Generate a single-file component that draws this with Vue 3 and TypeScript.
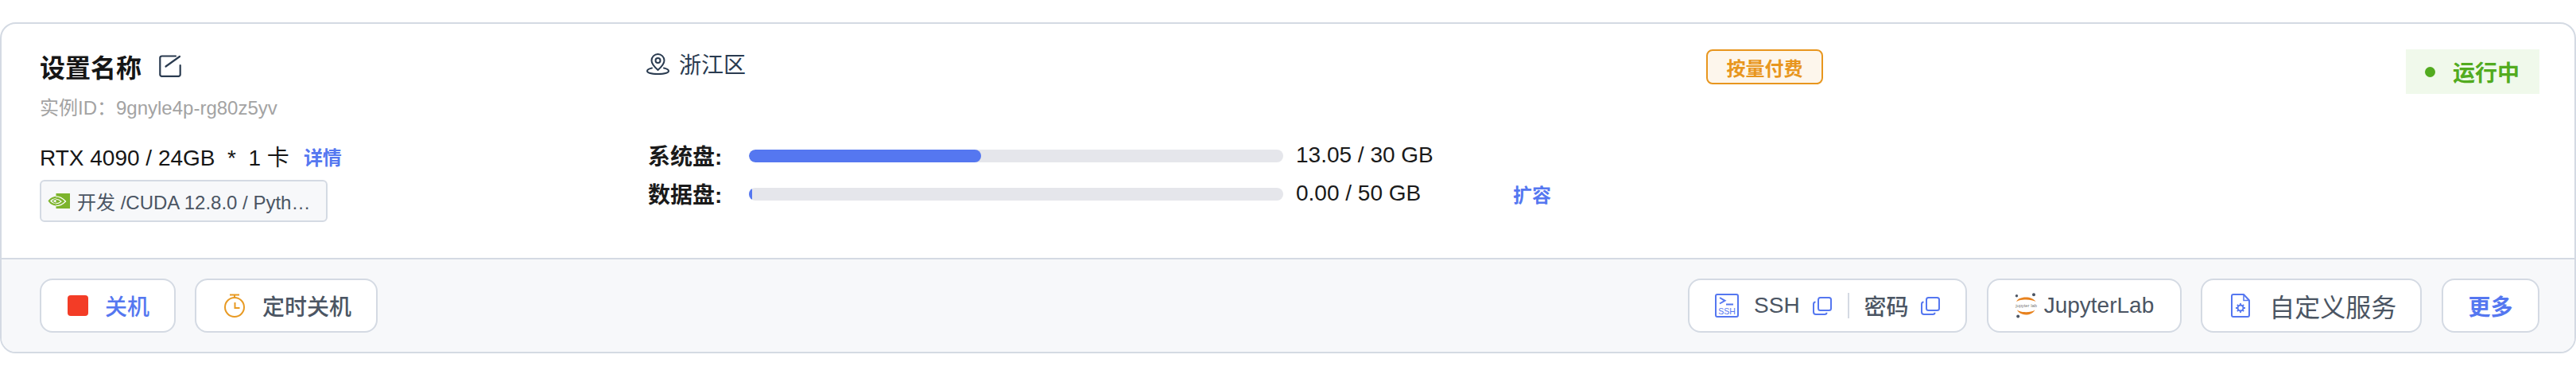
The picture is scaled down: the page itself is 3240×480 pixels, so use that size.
<script setup lang="ts">
interface Disk {
  label: string
  used: number
  total: number
  expand: boolean
}
const disks: Disk[] = [
  { label: '系统盘:', used: 13.05, total: 30, expand: false },
  { label: '数据盘:', used: 0, total: 50, expand: true },
]
const pct = (d: Disk): string => (d.used === 0 ? '4px' : `${(d.used / d.total) * 100}%`)
</script>

<template>
  <div class="page">
    <section class="card">
      <div class="top">
        <div class="col-left">
          <div class="title-row">
            <span class="title">设置名称</span>
            <svg class="edit" viewBox="0 0 28 28" fill="none" stroke="#2a3b50" stroke-width="2.2" stroke-linecap="round" stroke-linejoin="round">
              <path d="M21 1.500H3.500a2.200 2.200 0 0 0-2.200 2.200v21a2.200 2.200 0 0 0 2.200 2.200h21a2.200 2.200 0 0 0 2.200-2.200V13" />
              <path d="M8.500 14.500 26 2" />
            </svg>
          </div>
          <div class="instance">实例ID&#xFF1A;9gnyle4p-rg80z5yv</div>
          <div class="gpu-row">
            <span class="gpu">RTX 4090 / 24GB &nbsp;*&nbsp; 1 卡</span>
            <span class="link detail">详情</span>
          </div>
          <div class="image-tag">
            <svg class="nvidia" viewBox="0 0 28 19" fill="none">
              <rect x="10.500" y="0" width="17.500" height="19" fill="#7db42c" />
              <path d="M10.500 3.800C5.500 4.200 2.500 6.800.5 9.600c2 3 5 5.600 10 6v-2.200C7 13 4.500 11.500 3 9.600 4.500 7.800 7 6.300 10.500 6z" fill="#7db42c" />
              <path d="M10.500 3.800c5 0 8.800 2.800 12 6.200-3.200 3.400-7 5.600-12 5.600" stroke="#fff" stroke-width="1.300" />
              <path d="M10.500 7.200c3 0 4.800 1.300 6.500 3-1.700 1.700-3.600 2.500-6.500 2.500" stroke="#fff" stroke-width="1.100" />
              <path d="M10.500 7.200C8.500 7.500 7 8.400 6 9.600c1 1.200 2.500 2.200 4.500 2.600" stroke="#7db42c" stroke-width="1.300" />
            </svg>
            <span class="image-text">开发 /CUDA 12.8.0 / Pyth…</span>
          </div>
        </div>

        <div class="col-mid">
          <div class="location">
            <svg class="pin" viewBox="0 0 29 27" fill="none" stroke="#2a3b50" stroke-width="2">
              <path d="M14.500 21C10 17 6.500 13.500 6.500 9a8 8 0 0 1 16 0c0 4.500-3.500 8-8 12z" stroke-linejoin="round" />
              <circle cx="14.500" cy="9" r="3" />
              <path d="M7 18.500C3.500 19.300 1 20.500 1 22.300c0 2.400 6 3.700 13.500 3.700S28 24.700 28 22.300c0-1.800-2.500-3-6-3.800" stroke-linecap="round" />
            </svg>
            <span>浙江区</span>
          </div>
          <div class="disks">
            <div v-for="d in disks" :key="d.label" class="disk">
              <span class="disk-label">{{ d.label }}</span>
              <div class="bar"><div class="bar-fill" :style="{ width: pct(d) }"></div></div>
              <span class="disk-value">{{ d.used.toFixed(2) }} / {{ d.total }} GB</span>
              <span v-if="d.expand" class="link expand">扩容</span>
            </div>
          </div>
        </div>

        <div class="col-right">
          <span class="pay-tag">按量付费</span>
          <span class="status"><i class="dot"></i>运行中</span>
        </div>
      </div>

      <div class="footer">
        <div class="group">
          <button class="btn btn-stop">
            <i class="stop-icon"></i>
            <span class="blue cjk">关机</span>
          </button>
          <button class="btn btn-timer">
            <svg class="ic-timer" viewBox="0 0 26 30" fill="none" stroke="#e89a23" stroke-width="2">
              <circle cx="13" cy="17" r="12" />
              <path d="M7 1.500h12M13 1.500V5" />
              <path d="M13.500 11v7h6" />
            </svg>
            <span class="cjk">定时关机</span>
          </button>
        </div>
        <div class="group group-right">
          <button class="btn btn-ssh">
            <svg class="ic-ssh" viewBox="0 0 30 30" fill="none">
              <rect x="1" y="1" width="28" height="28" rx="2" stroke="#5577f0" stroke-width="2" />
              <path d="M6 5 12.500 8.800 6 12.500M14 13.500h9" stroke="#5577f0" stroke-width="2" />
              <text x="15" y="26" text-anchor="middle" fill="#5577f0" font-size="10.500" font-family="Liberation Sans, sans-serif">SSH</text>
            </svg>
            <span class="ssh-label">SSH</span>
            <svg class="ic-copy" viewBox="0 0 24 23" fill="none" stroke="#5577f0" stroke-width="2">
              <rect x="7" y="1" width="16" height="16" rx="2.500" />
              <path d="M3.500 6.500C2 6.500 1 7.500 1 9v10c0 2 1.500 3 3 3h11c1.500 0 2.500-1 2.500-2.200" />
            </svg>
            <i class="sep"></i>
            <span class="pwd-label cjk">密码</span>
            <svg class="ic-copy" viewBox="0 0 24 23" fill="none" stroke="#5577f0" stroke-width="2">
              <rect x="7" y="1" width="16" height="16" rx="2.500" />
              <path d="M3.500 6.500C2 6.500 1 7.500 1 9v10c0 2 1.500 3 3 3h11c1.500 0 2.500-1 2.500-2.200" />
            </svg>
          </button>
          <button class="btn btn-jup">
            <svg class="ic-jup" viewBox="0 0 29 32" fill="none">
              <path d="M2 11C6 3.500 22 3.500 26.500 11 21 7.500 7.500 7.500 2 11z" fill="#e8821e" />
              <path d="M3 21.500c4 8 18 8 22.500 0-5 3.500-17.500 3.500-22.500 0z" fill="#e8821e" />
              <circle cx="2.500" cy="3.800" r="1.700" fill="#4b5563" />
              <circle cx="24" cy="2.200" r="2" fill="#4b5563" />
              <circle cx="4.200" cy="29.500" r="2" fill="#4b5563" />
              <text x="14.500" y="17.500" text-anchor="middle" fill="#777" font-size="5.800" font-family="Liberation Sans, sans-serif">jupyter lab</text>
            </svg>
            <span>JupyterLab</span>
          </button>
          <button class="btn btn-custom">
            <svg class="ic-file" viewBox="0 0 24 30" fill="none" stroke="#5577f0">
              <path d="M3 1h13l7 7.500V27a2 2 0 0 1-2 2H3a2 2 0 0 1-2-2V3a2 2 0 0 1 2-2z" stroke-width="2" stroke-linejoin="round" />
              <path d="M16 1v7.500h7" stroke-width="1.500" />
              <circle cx="12" cy="18" r="3.500" stroke-width="2" />
              <path d="M12 12v2.500M12 21.500V24M6 18h2.500M15.500 18H18M7.800 13.800l1.800 1.800M14.400 20.400l1.800 1.800M7.800 22.200l1.800-1.800M14.400 15.600l1.800-1.800" stroke-width="1.800" />
            </svg>
            <span class="custom-label">自定义服务</span>
          </button>
          <button class="btn btn-more"><span class="blue strong">更多</span></button>
        </div>
      </div>
    </section>
  </div>
</template>

<style scoped>
.page {
  width: 3240px;
  height: 480px;
  padding-top: 28px;
  box-sizing: border-box;
  background: #fff;
  font-family: "Liberation Sans", "Noto Sans CJK SC", sans-serif;
  color: #1a1a1a;
}
.card {
  box-sizing: border-box;
  width: 3240px;
  height: 416px;
  border: 2px solid #d4dae3;
  border-radius: 20px;
  overflow: hidden;
  display: flex;
  flex-direction: column;
}
.top {
  flex: 1;
  display: grid;
  grid-template-columns: 765px 1331px 1fr;
  padding: 32px 44px 0 48px;
}
.title-row {
  display: flex;
  align-items: center;
  height: 42px;
  gap: 22px;
}
.title {
  font-size: 32px;
  font-weight: 700;
  color: #161616;
}
.edit {
  width: 28px;
  height: 28px;
}
.instance {
  margin-top: 14px;
  font-size: 24px;
  line-height: 36px;
  color: #a3a3a3;
}
.gpu-row {
  display: flex;
  align-items: center;
  margin-top: 22px;
  height: 40px;
  gap: 18px;
}
.gpu {
  font-size: 28px;
  color: #161616;
}
.link {
  color: #5577f0;
  font-size: 24px;
  font-weight: 700;
}
.image-tag {
  box-sizing: border-box;
  margin-top: 10px;
  width: 362px;
  height: 53px;
  display: flex;
  align-items: center;
  gap: 9px;
  padding: 0 8px;
  background: #f7f8fa;
  border: 2px solid #d4dae3;
  border-radius: 6px;
}
.nvidia {
  flex: none;
  width: 28px;
  height: 19px;
}
.image-text {
  font-size: 24px;
  color: #4b5563;
  white-space: nowrap;
}
.location {
  display: flex;
  align-items: center;
  height: 36px;
  gap: 12px;
  font-size: 28px;
  color: #2a3b50;
  margin-left: -2px;
}
.pin {
  width: 29px;
  height: 27px;
}
.disks {
  margin-top: 74px;
}
.disk {
  display: flex;
  align-items: center;
  height: 48px;
}
.disk-label,
.disk-value,
.expand {
  margin-bottom: 2px;
}
.disk-label {
  width: 127px;
  font-size: 28px;
  font-weight: 700;
  color: #1a1a1a;
}
.bar {
  width: 672px;
  height: 16px;
  border-radius: 8px;
  background: #e5e6eb;
  overflow: hidden;
}
.bar-fill {
  height: 100%;
  border-radius: 8px;
  background: #5577f0;
}
.disk-value {
  width: 273px;
  margin-left: 16px;
  font-size: 28px;
  color: #1a1a1a;
}
.col-right {
  display: flex;
  justify-content: space-between;
  align-items: flex-start;
}
.pay-tag {
  box-sizing: border-box;
  width: 147px;
  height: 44px;
  display: flex;
  align-items: center;
  justify-content: center;
  font-size: 24px;
  font-weight: 700;
  color: #e8961e;
  background: #fdf6ec;
  border: 2px solid #e8961e;
  border-radius: 8px;
}
.status {
  box-sizing: border-box;
  width: 168px;
  height: 56px;
  display: flex;
  align-items: center;
  padding-left: 24px;
  gap: 22px;
  background: #f0f9eb;
  color: #52ab1f;
  font-size: 28px;
  font-weight: 700;
}
.dot {
  width: 13px;
  height: 13px;
  border-radius: 50%;
  background: #52ab1f;
}
.footer {
  flex: none;
  box-sizing: border-box;
  height: 118px;
  display: flex;
  align-items: center;
  justify-content: space-between;
  padding: 0 44px 0 48px;
  border-top: 2px solid #d4dae3;
  background: #f7f8fa;
}
.group {
  display: flex;
  gap: 24px;
}
.group-right {
  gap: 24.670px;
}
.btn {
  box-sizing: border-box;
  height: 68px;
  display: flex;
  align-items: center;
  background: #fff;
  border: 2px solid #d4dae3;
  border-radius: 16px;
  font-family: inherit;
  font-size: 28px;
  color: #4b5563;
}
.cjk {
  font-weight: 500;
}
.blue {
  color: #5577f0;
}
.strong {
  font-weight: 700;
}
.btn-stop {
  width: 171px;
  padding: 0 0 0 33px;
  gap: 21px;
}
.stop-icon {
  width: 26px;
  height: 26px;
  border-radius: 4px;
  background: #f33c26;
}
.btn-timer {
  width: 230px;
  padding: 0 0 0 35px;
  gap: 22px;
}
.ic-timer {
  width: 26px;
  height: 30px;
}
.btn-ssh {
  width: 351px;
  padding: 0 0 0 32px;
}
.ic-ssh {
  width: 30px;
  height: 30px;
}
.ssh-label {
  margin-left: 19px;
}
.ic-copy {
  width: 24px;
  height: 23px;
  margin-left: 16px;
}
.sep {
  width: 2px;
  height: 32px;
  margin-left: 20px;
  background: #d4dae3;
}
.pwd-label {
  margin-left: 19px;
}
.pwd-label + .ic-copy {
  margin-left: 15px;
}
.btn-jup {
  width: 245px;
  padding: 0 0 0 33px;
  gap: 8px;
}
.ic-jup {
  width: 29px;
  height: 32px;
}
.btn-custom {
  width: 278px;
  padding: 0 0 0 36px;
  gap: 24px;
}
.ic-file {
  width: 24px;
  height: 30px;
}
.custom-label {
  font-size: 32px;
}
.btn-more {
  width: 123px;
  justify-content: center;
}
</style>
<style>
html,
body {
  margin: 0;
  background: #fff;
}
</style>
